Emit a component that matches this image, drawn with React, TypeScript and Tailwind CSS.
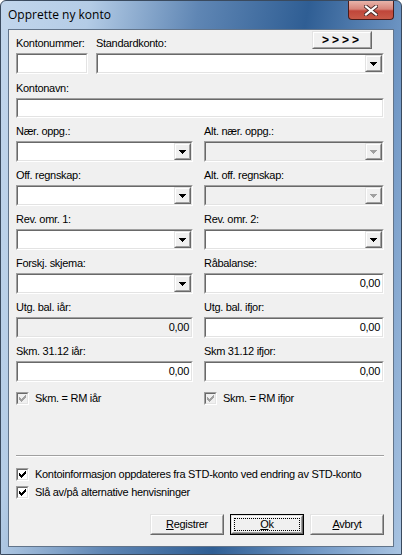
import React from "react";

const ui = "font-['Liberation_Sans',Arial,sans-serif] text-[11px] leading-[13px] tracking-[-0.3px] text-black";

function Arrow({ disabled }: { disabled?: boolean }) {
  return (
    <svg width="7" height="4" viewBox="0 0 7 4" shapeRendering="crispEdges">
      <path d="M0 0h7v1h-1v1h-1v1h-1v1h-1v-1h-1v-1h-1v-1h-1z" fill={disabled ? "#a0a0a0" : "#000"} />
    </svg>
  );
}

function Sunken({ children, className = "", disabled }: { children?: React.ReactNode; className?: string; disabled?: boolean }) {
  return (
    <div className={`border border-t-[#a0a0a0] border-l-[#a0a0a0] border-b-white border-r-white ${className}`}>
      <div
        className={`h-full border border-t-[#696969] border-l-[#696969] border-b-[#e3e3e3] border-r-[#e3e3e3] ${
          disabled ? "bg-[#f0f0f0]" : "bg-white"
        }`}
      >
        {children}
      </div>
    </div>
  );
}

function Raised({ children, className = "" }: { children?: React.ReactNode; className?: string }) {
  return (
    <div className={`border border-t-[#e3e3e3] border-l-[#e3e3e3] border-b-[#696969] border-r-[#696969] bg-[#f0f0f0] ${className}`}>
      <div className="flex h-full items-center justify-center border border-t-white border-l-white border-b-[#a0a0a0] border-r-[#a0a0a0]">
        {children}
      </div>
    </div>
  );
}

function Combo({ disabled }: { disabled?: boolean }) {
  return (
    <Sunken disabled={disabled} className="h-[21px]">
      <div className="flex h-full justify-end">
        <Raised className="h-full w-[17px]">
          <Arrow disabled={disabled} />
        </Raised>
      </div>
    </Sunken>
  );
}

function NumBox({ disabled, value = "0,00" }: { disabled?: boolean; value?: string }) {
  return (
    <Sunken disabled={disabled} className="h-[21px]">
      <div className="flex h-full items-center justify-end pr-[2px]">{value}</div>
    </Sunken>
  );
}

function Check({ disabled }: { disabled?: boolean }) {
  return (
    <Sunken disabled={disabled} className="h-[13px] w-[13px] shrink-0">
      <div className="flex h-full items-center justify-center">
        <svg width="7" height="7" viewBox="0 0 7 7" shapeRendering="crispEdges">
          <path
            d="M6 0h1v3h-1v1h-1v1h-1v1h-1v1h-1v-1h-1v-1h-1v-3h1v1h1v1h1v-1h1v-1h1z"
            fill={disabled ? "#a0a0a0" : "#000"}
          />
        </svg>
      </div>
    </Sunken>
  );
}

function Field({ label, children, className = "" }: { label: string; children: React.ReactNode; className?: string }) {
  return (
    <div className={`flex flex-col ${className}`}>
      <div className="h-[13px] whitespace-nowrap">{label}</div>
      <div className="mt-[3px]">{children}</div>
    </div>
  );
}

function Btn({ label, isDefault }: { label: string; isDefault?: boolean }) {
  const text = (
    <span>
      <span className="underline underline-offset-[1px]">{label[0]}</span>
      {label.slice(1)}
    </span>
  );
  if (isDefault) {
    return (
      <div className="h-[21px] w-[74px] border border-black">
        <Raised className="h-full w-full">
          <div className="m-[1px] flex h-[calc(100%-2px)] w-[calc(100%-2px)] items-center justify-center border border-dotted border-black">
            {text}
          </div>
        </Raised>
      </div>
    );
  }
  return <Raised className="h-[21px] w-[74px]">{text}</Raised>;
}

export default function App() {
  const rows: [string, React.ReactNode, string, React.ReactNode][] = [
    ["Nær. oppg.:", <Combo />, "Alt. nær. oppg.:", <Combo disabled />],
    ["Off. regnskap:", <Combo />, "Alt. off. regnskap:", <Combo disabled />],
    ["Rev. omr. 1:", <Combo />, "Rev. omr. 2:", <Combo />],
    ["Forskj. skjema:", <Combo />, "Råbalanse:", <NumBox />],
    ["Utg. bal. iår:", <NumBox disabled />, "Utg. bal. ifjor:", <NumBox />],
    ["Skm. 31.12 iår:", <NumBox />, "Skm 31.12 ifjor:", <NumBox />],
  ];

  return (
    <div className={`h-[555px] w-[402px] bg-white ${ui}`}>
      <div className="flex h-full w-full flex-col rounded-t-[6px] border border-[#3a4a5e] bg-[linear-gradient(100deg,#c2d6ec_0%,#b4cce6_18%,#5f86b4_40%,#2f5e94_62%,#6f96c4_82%,#a9c4e2_100%)]">
        {/* title bar */}
        <div className="flex h-[28px] shrink-0 justify-between">
          <div className="pl-[7px] pt-[6px] font-['Open_Sans',sans-serif] text-[12px] leading-[16px] tracking-normal text-black">
            Opprette ny konto
          </div>
          <div className="mr-[7px] flex h-[19px] w-[46px] items-center justify-center rounded-b-[4px] border border-t-0 border-[#4a1c1a] bg-[linear-gradient(180deg,#e8b4aa_0%,#d7857a_45%,#c0463a_55%,#c85a48_100%)]">
            <svg width="14" height="11" viewBox="0 0 14 11">
              <path d="M2 1.5l10 8M12 1.5l-10 8" stroke="#4a2a28" strokeWidth="4" strokeLinecap="square" />
              <path d="M2 1.5l10 8M12 1.5l-10 8" stroke="#fff" strokeWidth="2.2" strokeLinecap="square" />
            </svg>
          </div>
        </div>

        {/* client area */}
        <div className="mx-[7px] mb-[7px] flex flex-1 flex-col border border-[#62748a] bg-[#f0f0f0] pl-[7px] pr-[9px]">
          {/* row 1 */}
          <div className="flex gap-[8px]">
            <div className="flex w-[72px] flex-col">
              <div className="flex h-[23px] items-end pb-[3px]">Kontonummer:</div>
              <Sunken className="h-[21px]" />
            </div>
            <div className="flex flex-1 flex-col">
              <div className="flex h-[23px] justify-between">
                <div className="self-end pb-[3px]">Standardkonto:</div>
                <Raised className="mr-[12px] mt-[1px] h-[18px] w-[60px]">
                  <span className="text-[12px] font-bold tracking-[3px]">&gt;&gt;&gt;&gt;</span>
                </Raised>
              </div>
              <Combo />
            </div>
          </div>

          <Field label="Kontonavn:" className="mt-[8px]">
            <Sunken className="h-[20px]" />
          </Field>

          <div className="mt-[7px] grid grid-cols-[177px_1fr] gap-x-[11px] gap-y-[7px]">
            {rows.map(([l1, c1, l2, c2]) => (
              <React.Fragment key={l1}>
                <Field label={l1}>{c1}</Field>
                <Field label={l2}>{c2}</Field>
              </React.Fragment>
            ))}
          </div>

          <div className="mt-[10px] grid grid-cols-[177px_1fr] gap-x-[11px]">
            <div className="flex items-center gap-[6px]">
              <Check disabled />
              <span>Skm. = RM iår</span>
            </div>
            <div className="flex items-center gap-[6px]">
              <Check disabled />
              <span>Skm. = RM ifjor</span>
            </div>
          </div>

          <div className="mt-[50px] border-t border-b border-t-[#a0a0a0] border-b-white" />

          <div className="mt-[11px] flex flex-col gap-[5px]">
            <div className="flex items-center gap-[6px]">
              <Check />
              <span>Kontoinformasjon oppdateres fra STD-konto ved endring av STD-konto</span>
            </div>
            <div className="flex items-center gap-[6px]">
              <Check />
              <span>Slå av/på alternative henvisninger</span>
            </div>
          </div>

          <div className="mt-[15px] flex justify-end gap-[6px]">
            <Btn label="Registrer" />
            <Btn label="Ok" isDefault />
            <Btn label="Avbryt" />
          </div>
        </div>
      </div>
    </div>
  );
}
